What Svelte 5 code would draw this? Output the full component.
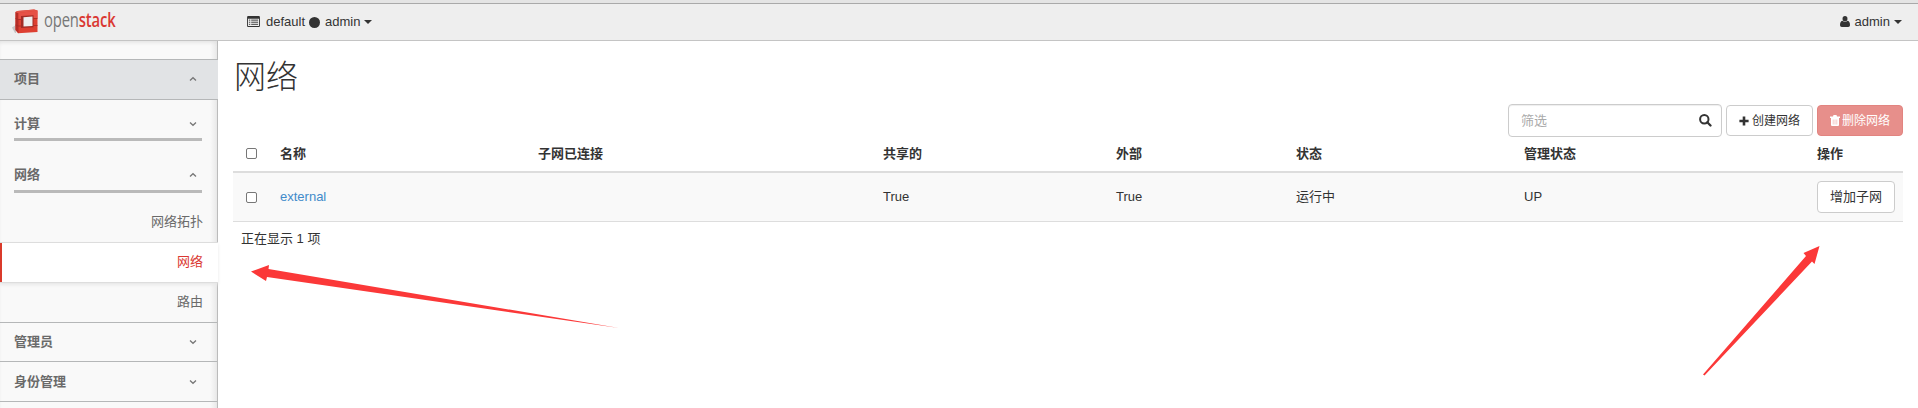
<script>
  const columns = ['名称', '子网已连接', '共享的', '外部', '状态', '管理状态', '操作'];
</script>

{#snippet chevron(up)}
  <svg class="chev" class:up width="8" height="6" viewBox="0 0 8 6"><path d="M1 1.5 4 4.3 7 1.5" fill="none" stroke="#777" stroke-width="1.3" /></svg>
{/snippet}

<div class="page">
  <header>
    <svg class="logo" width="26" height="26" viewBox="0 0 26 26">
      <path d="M0 19.5 4 17V25H3z" fill="#c6c4c4" />
      <path d="M3.5 4 5.5 3 22 1.5 25.5 2.5V24L6 25.2 3.5 22z" fill="#dd3f31" />
      <path d="M3.5 4 6.5 5V25.2L3.5 22z" fill="#b52d26" />
      <path d="M3.5 4 5.5 3 22 1.5 25.5 2.5 6.5 5z" fill="#e2564a" />
      <path d="M6.5 5 25.5 2.5V10L6.5 11z" fill="#e65146" />
      <path d="M9 8 21.5 7.3V19.3L9 20z" fill="#a32b25" />
      <path d="M11.5 9.3 20.5 8.6V18L11.5 18.6z" fill="#eee" />
      <path d="M3.5 10.5 6.5 11.5H9M3.5 17 6.5 18H9M21.5 10.5H25.5M21.5 17.5H25.5" fill="none" stroke="#a32b25" stroke-width=".8" />
    </svg>
    <span class="brand"><span>open<b>stack</b></span></span>
    <div class="context">
      <svg width="13" height="11" viewBox="0 0 14 12"><path d="M1.2 0H12.8Q14 0 14 1.2V10.8Q14 12 12.8 12H1.2Q0 12 0 10.8V1.2Q0 0 1.2 0zM1 3V11H13V3z" fill="#333" fill-rule="evenodd" /><path d="M2 4.5H3.5M4.5 4.5H12M2 6.8H3.5M4.5 6.8H12M2 9.1H3.5M4.5 9.1H12" stroke="#333" /></svg>
      <span class="domain">default</span><i class="dot"></i><span>admin</span><i class="caret"></i>
    </div>
    <div class="user">
      <svg width="10" height="11" viewBox="0 0 11 12"><ellipse cx="5.5" cy="3" rx="2.7" ry="3" fill="#333" /><path d="M2.5 5.3Q5.5 7.8 8.5 5.3 11 6 11 10 11 12 9 12H2Q0 12 0 10 0 6 2.5 5.3z" fill="#333" /></svg>
      <span>admin</span><i class="caret"></i>
    </div>
  </header>
  <div class="body">
    <nav>
      <div class="panel open"><span>项目</span>{@render chevron(true)}</div>
      <div class="group first"><span>计算</span>{@render chevron(false)}</div>
      <div class="group"><span>网络</span>{@render chevron(true)}</div>
      <div class="link topology">网络拓扑</div>
      <div class="link active">网络</div>
      <div class="link">路由</div>
      <div class="panel admin"><span>管理员</span>{@render chevron(false)}</div>
      <div class="panel identity"><span>身份管理</span>{@render chevron(false)}</div>
      <div class="panel end"></div>
    </nav>
    <main>
      <h1>网络</h1>
      <div class="actions">
        <div class="search"><span>筛选</span>
          <svg width="13" height="13" viewBox="0 0 13 13"><circle cx="5.3" cy="5.3" r="4.2" fill="none" stroke="#333" stroke-width="2" /><path d="M8.3 8.3 11.5 11.5" stroke="#333" stroke-width="2.3" stroke-linecap="round" /></svg>
        </div>
        <button class="create"><svg width="10" height="10" viewBox="0 0 10 10"><path d="M5 .4V9.6M.4 5H9.6" stroke="#333" stroke-width="2.6" /></svg>创建网络</button>
        <button class="delete"><svg width="10" height="11" viewBox="0 0 10 11"><path d="M0 1.5H3L3.5 0H6.5L7 1.5H10V3H0zM1 3H9V10Q9 11 8 11H2Q1 11 1 10z" fill="#fff" /><path d="M3.2 4.5V9.5M5 4.5V9.5M6.8 4.5V9.5" stroke="#f0b5b2" stroke-width=".7" /></svg>删除网络</button>
      </div>
      <div class="row head">
        <i class="check"></i>
        {#each columns as column}<span>{column}</span>{/each}
      </div>
      <div class="row data">
        <i class="check"></i>
        <span class="ext">external</span><span></span><span>True</span><span>True</span><span>运行中</span><span>UP</span>
        <button class="subnet">增加子网</button>
      </div>
      <div class="foot">正在显示 1 项</div>
    </main>
  </div>
  <svg class="arrows" width="1918" height="408" viewBox="0 0 1918 408" fill="#fb3838">
    <path d="M251 271.5 269 265 268.5 269 619 328 267 277 266 281z" />
    <path d="M1819.5 246 1814.5 264 1812 261.5 1704.5 375.5 1703 374.5 1806 256 1803.5 253z" />
  </svg>
</div>

<style>
  :global(body) { margin: 0; background: #fff; }
  .page { position: relative; width: 1918px; height: 408px; overflow: hidden; font: 13px/20px "Liberation Sans", "Noto Sans CJK SC", sans-serif; color: #333; }
  header { box-sizing: border-box; height: 41px; border-top: 3px solid #e4e4e4; border-bottom: 1px solid #c4c4c4; background: #eee; box-shadow: inset 0 1px #a9a9a9; display: flex; align-items: center; padding: 0 16px 0 12px; }
  .logo { flex: none; margin-top: -1px; }
  .brand { width: 74px; margin: -3px 0 0 6px; font: 500 20px/26px "Open Sans", sans-serif; color: #777; }
  .brand span { display: block; transform: scaleX(.74); transform-origin: 0 50%; letter-spacing: -.2px; white-space: nowrap; }
  .brand b { color: #da3832; font-weight: 600; }
  .context, .user { display: flex; align-items: center; }
  .context { margin-left: 129px; }
  .domain { margin-left: 6px; }
  .dot { width: 11px; height: 11px; border-radius: 50%; background: #333; margin: 2px 5px 0 4px; }
  .caret { border: 4px solid transparent; border-top-color: #333; border-bottom: 0; margin-left: 4px; }
  .user { margin-left: auto; }
  .user span { margin-left: 5px; }
  .body { display: flex; height: 367px; }
  nav { flex: none; box-sizing: border-box; width: 218px; padding-top: 18px; background: linear-gradient(90deg, transparent 210px, #e9e9e9 217px), #f9f9f9; border-right: 1px solid #bbb; box-shadow: inset 0 3px 4px -2px #ddd; color: #6a6a6a; }
  .panel { box-sizing: border-box; display: flex; justify-content: space-between; align-items: center; border-top: 1px solid #b5b7b8; padding: 0 20px 0 14px; font-weight: 700; height: 40px; }
  .open { height: 41px; border-bottom: 1px solid #b5b7b8; background: #e1e3e5; margin-right: -1px; padding-right: 21px; padding-bottom: 2px; }
  .admin { height: 39px; }
  .end { height: 6px; }
  .up { transform: rotate(180deg); }
  .group { box-sizing: border-box; height: 52px; margin: 0 15px 0 14px; padding: 19px 5px 0 0; display: flex; align-items: center; justify-content: space-between; border-bottom: 3px solid #bababa; font-weight: 700; }
  .group.first { height: 41px; padding-top: 10px; }
  .link { box-sizing: border-box; height: 40px; line-height: 38px; padding-right: 14px; text-align: right; }
  .topology { height: 49px; line-height: 57px; }
  .active { height: 41px; color: #da3832; background: #fff; border: solid #ddd; border-width: 1px 0; box-shadow: inset 2px 0 #da3a2b, 0 2px 3px #e8e8e8; margin-right: -1px; padding-right: 15px; line-height: 38px; }
  .active + .link { height: 39px; }
  main { width: 1670px; padding: 0 0 0 15px; }
  h1 { margin: 10px 0 0 1px; height: 53px; font: 300 32px/46px "Noto Sans CJK SC", sans-serif; }
  .actions { display: flex; justify-content: flex-end; align-items: center; height: 33px; }
  .search { box-sizing: border-box; width: 214px; height: 33px; border: 1px solid #ccc; border-radius: 4px; box-shadow: inset 0 1px 1px #eee; display: flex; align-items: center; justify-content: space-between; padding: 0 9px 0 12px; color: #aaa; margin-right: 4px; }
  button { box-sizing: border-box; border: 1px solid #ccc; border-radius: 4px; background: #fff; color: #333; font: inherit; padding: 0; display: flex; align-items: center; justify-content: center; white-space: nowrap; }
  .create { width: 87px; height: 31px; gap: 3px; font-size: 12px; margin-right: 4px; }
  .delete { width: 86px; height: 31px; gap: 2px; font-size: 12px; background: #e78f8b; border-color: #e28480; color: #fff; }
  .row { box-sizing: border-box; display: grid; grid-template-columns: 47px 258px 345px 233px 180px 228px 293px 86px; align-items: center; }
  .head { margin-top: 1px; height: 35px; border-bottom: 2px solid #ddd; font-weight: 700; padding-bottom: 2px; }
  .data { height: 49px; border-bottom: 1px solid #ddd; background: #f9f9f9; }
  .check { box-sizing: border-box; width: 11px; height: 11px; border: 1px solid #777; border-radius: 2px; background: #fff; margin-left: 13px; }
  .ext { color: #428bca; }
  .subnet { width: 78px; height: 32px; }
  .foot { padding: 7px 0 0 8px; }
  .arrows { position: absolute; left: 0; top: 0; pointer-events: none; }
</style>
